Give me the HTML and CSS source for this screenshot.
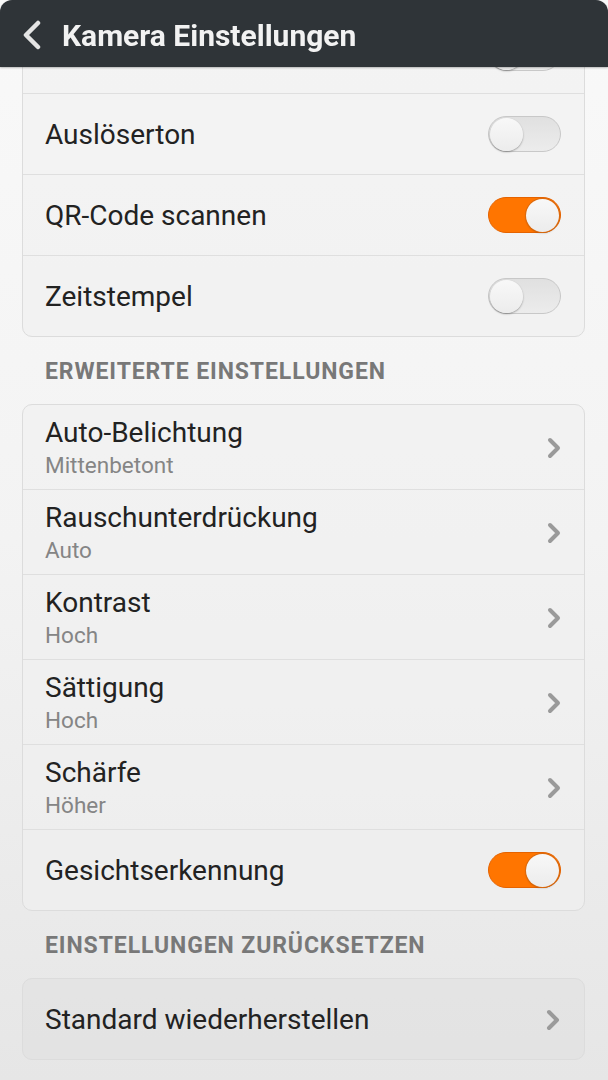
FILE: index.html
```html
<!DOCTYPE html>
<html lang="de">
<head>
    <meta charset="UTF-8">
    <meta name="viewport" content="width=device-width, initial-scale=1.0">
    <title>Kamera Einstellungen</title>
    <link rel="stylesheet" href="styles.css">
</head>
<body>
    <div class="titlebar">
        <svg class="back" width="24" height="30" viewBox="0 0 24 30">
            <path d="M18 3 L6 15 L18 27" fill="none" stroke="#e4e4e4" stroke-width="4.5" stroke-linecap="round" stroke-linejoin="round"/>
        </svg>
        <div class="title">Kamera Einstellungen</div>
    </div>

    <div class="content">
        <div class="card">
            <!-- row scrolled under the title bar, only the switch edge shows -->
            <div class="row end">
                <div class="switch"><div class="knob"></div></div>
            </div>
            <div class="row">
                <span class="label">Auslöserton</span>
                <div class="switch"><div class="knob"></div></div>
            </div>
            <div class="row">
                <span class="label">QR-Code scannen</span>
                <div class="switch on"><div class="knob"></div></div>
            </div>
            <div class="row">
                <span class="label">Zeitstempel</span>
                <div class="switch"><div class="knob"></div></div>
            </div>
        </div>

        <div class="section">ERWEITERTE EINSTELLUNGEN</div>

        <div class="card">
            <div class="row tall">
                <div class="text">
                    <div class="label">Auto-Belichtung</div>
                    <div class="sub">Mittenbetont</div>
                </div>
                <svg class="chevron" width="16" height="22" viewBox="0 0 16 22"><path d="M4 3 L12 11 L4 19" fill="none" stroke="#9a9a9a" stroke-width="4" stroke-linecap="round" stroke-linejoin="round"/></svg>
            </div>
            <div class="row tall">
                <div class="text">
                    <div class="label">Rauschunterdrückung</div>
                    <div class="sub">Auto</div>
                </div>
                <svg class="chevron" width="16" height="22" viewBox="0 0 16 22"><path d="M4 3 L12 11 L4 19" fill="none" stroke="#9a9a9a" stroke-width="4" stroke-linecap="round" stroke-linejoin="round"/></svg>
            </div>
            <div class="row tall">
                <div class="text">
                    <div class="label">Kontrast</div>
                    <div class="sub">Hoch</div>
                </div>
                <svg class="chevron" width="16" height="22" viewBox="0 0 16 22"><path d="M4 3 L12 11 L4 19" fill="none" stroke="#9a9a9a" stroke-width="4" stroke-linecap="round" stroke-linejoin="round"/></svg>
            </div>
            <div class="row tall">
                <div class="text">
                    <div class="label">Sättigung</div>
                    <div class="sub">Hoch</div>
                </div>
                <svg class="chevron" width="16" height="22" viewBox="0 0 16 22"><path d="M4 3 L12 11 L4 19" fill="none" stroke="#9a9a9a" stroke-width="4" stroke-linecap="round" stroke-linejoin="round"/></svg>
            </div>
            <div class="row tall">
                <div class="text">
                    <div class="label">Schärfe</div>
                    <div class="sub">Höher</div>
                </div>
                <svg class="chevron" width="16" height="22" viewBox="0 0 16 22"><path d="M4 3 L12 11 L4 19" fill="none" stroke="#9a9a9a" stroke-width="4" stroke-linecap="round" stroke-linejoin="round"/></svg>
            </div>
            <div class="row">
                <span class="label">Gesichtserkennung</span>
                <div class="switch on"><div class="knob"></div></div>
            </div>
        </div>

        <div class="section">EINSTELLUNGEN ZURÜCKSETZEN</div>

        <div class="card reset">
            <div class="row">
                <span class="label">Standard wiederherstellen</span>
                <svg class="chevron" width="16" height="22" viewBox="0 0 16 22"><path d="M4 3 L12 11 L4 19" fill="none" stroke="#9a9a9a" stroke-width="4" stroke-linecap="round" stroke-linejoin="round"/></svg>
            </div>
        </div>
    </div>
</body>
</html>
```

FILE: styles.css
```css
/* General styles */
body {
    font-family: Roboto, "Liberation Sans", sans-serif;
    margin: 0;
    padding: 0;
    height: 1080px;
    overflow: hidden;
    background: linear-gradient(#f9f9f9, #f3f3f3 50%, #e6e6e6);
    color: #222;
}

/* the list is scrolled a bit, so the bar lies over the first row */
.titlebar {
    position: fixed;
    top: 0;
    left: 0;
    right: 0;
    height: 67px;
    display: flex;
    align-items: center;
    background-color: #2f3438;
    border-radius: 12px 12px 0 0;
    box-shadow: 0 1px 2px rgba(0, 0, 0, 0.25);
    z-index: 2;
}

.titlebar .back {
    margin-left: 20px;
    margin-right: 18px;
    margin-top: 2px;
}

.titlebar .title {
    color: #f2f2f2;
    font-size: 30px;
    font-weight: bold;
    margin-top: 3px;
}

.content {
    padding: 12px 23px 0 22px;
}

.card {
    border: 1px solid #dcdcdc;
    border-radius: 10px;
    background-color: rgba(240, 240, 240, 0.6);
}

.card.reset {
    background-color: rgba(225, 225, 225, 0.6);
}

.row {
    height: 80px;
    display: flex;
    align-items: center;
    justify-content: space-between;
    padding: 0 23px 0 22px;
}

.row.end {
    justify-content: flex-end;
}

.row + .row {
    border-top: 1px solid #dfdfdf;
}

.row.tall {
    height: 84px;
    padding-right: 22px;
}

.label {
    font-size: 28px;
    color: #222;
}

.text {
    padding-top: 2px;
}

.text .label {
    line-height: 32px;
}

.text .sub {
    font-size: 22.5px;
    line-height: 28px;
    margin-top: 2px;
    color: #858585;
}

.chevron {
    margin-top: 2px;
}

.section {
    height: 67px;
    line-height: 70px;
    padding-left: 23px;
    font-size: 23px;
    font-weight: bold;
    letter-spacing: 0.9px;
    color: #787878;
}

.switch {
    width: 73px;
    height: 36px;
    box-sizing: border-box;
    border-radius: 18px;
    border: 1px solid #c8c8c8;
    background: linear-gradient(#e0e0e0, #ececec);
    display: flex;
    align-items: center;
    padding: 0 1px;
}

.switch .knob {
    width: 33px;
    height: 33px;
    border-radius: 50%;
    background: linear-gradient(#f8f8f8, #ececec);
    box-shadow: 0 1px 2px rgba(0, 0, 0, 0.35);
}

.switch.on {
    border-color: #e56300;
    background: #ff7500;
    justify-content: flex-end;
}

.switch.on .knob {
    box-shadow: 0 0 0 1px #d86a10, 0 1px 2px rgba(0, 0, 0, 0.3);
}
```
